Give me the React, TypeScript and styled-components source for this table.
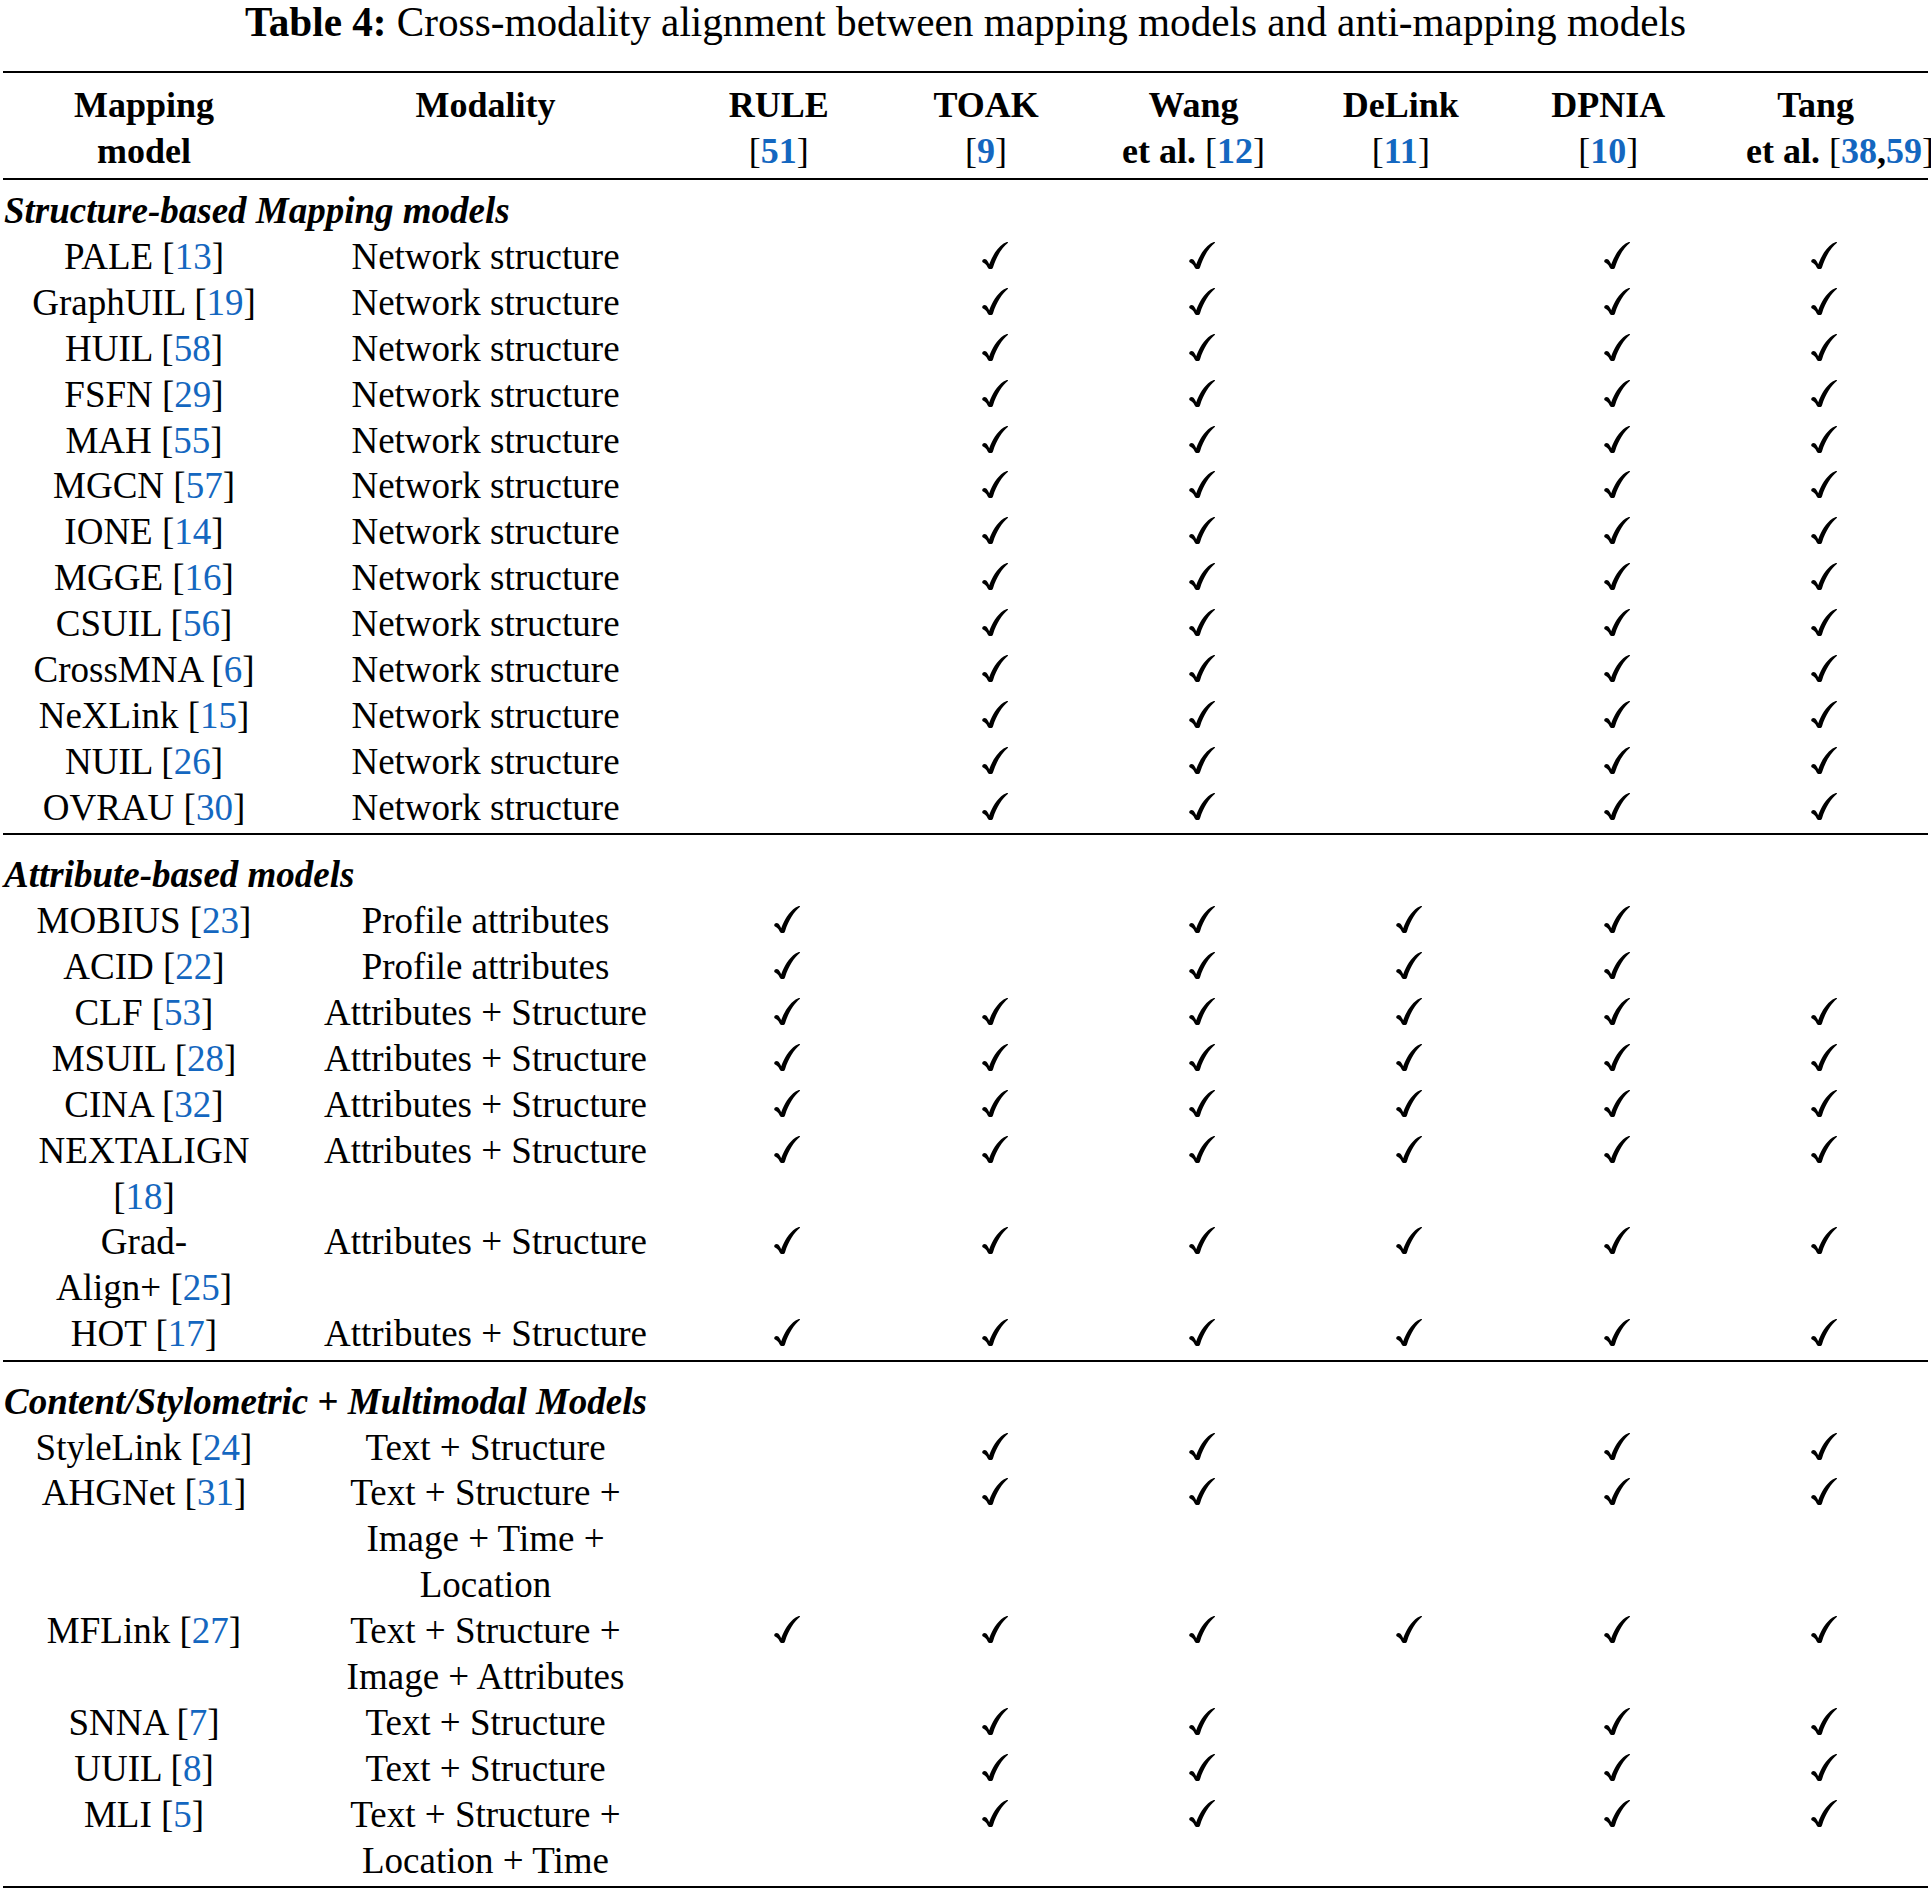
import React from "react";
import styled, { createGlobalStyle } from "styled-components";

const GlobalStyle = createGlobalStyle`
  html, body { margin: 0; padding: 0; background: #ffffff; }
  body {
    font-family: "Liberation Serif", "Times New Roman", serif;
    color: #000000;
  }
`;

const COLS = "282px 390px repeat(6, 207.4px) 1fr";
const BLUE = "#1467c0";

const Page = styled.div`
  width: 1931px;
  box-sizing: border-box;
  padding: 0 3px;
`;

const Caption = styled.div`
  font-size: 41.2px;
  line-height: 45.8px;
  text-align: center;
  white-space: nowrap;
  strong { font-weight: 700; }
`;

const Table = styled.div`
  margin-top: 24.9px;
`;

const HeaderRow = styled.div`
  display: grid;
  grid-template-columns: ${COLS};
  border-top: 2px solid #000;
  border-bottom: 2px solid #000;
  padding: 9px 0 4.8px;
  font-weight: 700;
  font-size: 36px;
  line-height: 46px;
  text-align: center;
`;

const HeadCell = styled.div<{ $pad?: number }>`
  padding-left: ${(p) => p.$pad ?? 0}px;
  white-space: nowrap;
`;

const HeadLine = styled.div<{ $shift?: number }>`
  white-space: nowrap;
  text-align: ${(p) => (p.$shift ? "left" : "center")};
  padding-left: ${(p) => p.$shift ?? 0}px;
`;

const Group = styled.section<{ $gap: number }>`
  margin-top: ${(p) => p.$gap}px;
  padding-bottom: 2.5px;
  border-bottom: 2px solid #000;
`;

const SectionTitle = styled.div`
  font-weight: 700;
  font-style: italic;
  font-size: 37px;
  line-height: 45.9px;
  padding-left: 1px;
  white-space: nowrap;
`;

const Upright = styled.span`
  font-style: normal;
`;

const Row = styled.div`
  display: grid;
  grid-template-columns: ${COLS};
  font-size: 37px;
  line-height: 45.9px;
  text-align: center;
`;

const ModelCell = styled.div`
  white-space: nowrap;
`;

const ModalityCell = styled.div`
  padding-left: 11px;
  white-space: nowrap;
`;

const CheckCell = styled.div`
  padding-left: 17px;
`;

const Bracket = styled.span`
  font-weight: 400;
`;

const Num = styled.span`
  color: ${BLUE};
`;

const CheckSvg = styled.svg`
  width: 26px;
  height: 27px;
  vertical-align: baseline;
`;

const Ref: React.FC<{ n: string }> = ({ n }) => {
  const parts = n.split(",");
  return (
    <>
      <Bracket>[</Bracket>
      {parts.map((p, i) => (
        <React.Fragment key={p}>
          {i > 0 && ","}
          <Num>{p}</Num>
        </React.Fragment>
      ))}
      <Bracket>]</Bracket>
    </>
  );
};

const Check: React.FC = () => (
  <CheckSvg viewBox="0 0 26 27" aria-label="check">
    <path
      d="M0.2 19.2 C0.4 17.4 2.6 16.4 4.2 17.6 C5.2 18.4 6 20 7.2 22.2 C10.4 13.6 15 6.2 21.6 1.6 C23 0.6 24.6 0 25.8 0 L26 0.8 C20.2 5.6 14.8 13.6 11 25.4 C10.6 26.6 9.8 27 8.8 27 L7.4 27 C6.6 27 6.1 26.5 5.7 25.6 C4.4 22.8 2.8 21.2 1 20.6 C0.5 20.3 0.2 19.8 0.2 19.2 Z"
      fill="#000"
    />
  </CheckSvg>
);

type RowData = {
  model: React.ReactNode;
  modality: React.ReactNode;
  checks: number[];
};

const NET = "Network structure";
const STRUCT = [0, 1, 1, 0, 1, 1];
const ALL = [1, 1, 1, 1, 1, 1];
const PROFILE = [1, 0, 1, 1, 1, 0];

const m = (name: string, n: string) => (
  <>
    {name} <Ref n={n} />
  </>
);

const section1: RowData[] = [
  ["PALE", "13"],
  ["GraphUIL", "19"],
  ["HUIL", "58"],
  ["FSFN", "29"],
  ["MAH", "55"],
  ["MGCN", "57"],
  ["IONE", "14"],
  ["MGGE", "16"],
  ["CSUIL", "56"],
  ["CrossMNA", "6"],
  ["NeXLink", "15"],
  ["NUIL", "26"],
  ["OVRAU", "30"],
].map(([name, n]) => ({ model: m(name, n), modality: NET, checks: STRUCT }));

const AS = "Attributes + Structure";
const section2: RowData[] = [
  { model: m("MOBIUS", "23"), modality: "Profile attributes", checks: PROFILE },
  { model: m("ACID", "22"), modality: "Profile attributes", checks: PROFILE },
  { model: m("CLF", "53"), modality: AS, checks: ALL },
  { model: m("MSUIL", "28"), modality: AS, checks: ALL },
  { model: m("CINA", "32"), modality: AS, checks: ALL },
  {
    model: (
      <>
        NEXTALIGN
        <br />
        <Ref n="18" />
      </>
    ),
    modality: AS,
    checks: ALL,
  },
  {
    model: (
      <>
        Grad-
        <br />
        Align+ <Ref n="25" />
      </>
    ),
    modality: AS,
    checks: ALL,
  },
  { model: m("HOT", "17"), modality: AS, checks: ALL },
];

const TS = "Text + Structure";
const section3: RowData[] = [
  { model: m("StyleLink", "24"), modality: TS, checks: STRUCT },
  {
    model: m("AHGNet", "31"),
    modality: (
      <>
        Text + Structure +
        <br />
        Image + Time +
        <br />
        Location
      </>
    ),
    checks: STRUCT,
  },
  {
    model: m("MFLink", "27"),
    modality: (
      <>
        Text + Structure +
        <br />
        Image + Attributes
      </>
    ),
    checks: ALL,
  },
  { model: m("SNNA", "7"), modality: TS, checks: STRUCT },
  { model: m("UUIL", "8"), modality: TS, checks: STRUCT },
  {
    model: m("MLI", "5"),
    modality: (
      <>
        Text + Structure +
        <br />
        Location + Time
      </>
    ),
    checks: STRUCT,
  },
];

const headers: { top: string; cite: React.ReactNode; shift?: number }[] = [
  { top: "RULE", cite: <Ref n="51" /> },
  { top: "TOAK", cite: <Ref n="9" /> },
  { top: "Wang", cite: <>et al. <Ref n="12" /></> },
  { top: "DeLink", cite: <Ref n="11" /> },
  { top: "DPNIA", cite: <Ref n="10" /> },
  { top: "Tang", cite: <>et al. <Ref n="38,59" /></>, shift: 34 },
];

const Body: React.FC<{ rows: RowData[] }> = ({ rows }) => (
  <>
    {rows.map((r, i) => (
      <Row key={i}>
        <ModelCell>{r.model}</ModelCell>
        <ModalityCell>{r.modality}</ModalityCell>
        {r.checks.map((c, j) => (
          <CheckCell key={j}>{c ? <Check /> : null}</CheckCell>
        ))}
      </Row>
    ))}
  </>
);

export default function App() {
  return (
    <>
      <GlobalStyle />
      <Page>
        <Caption>
          <strong>Table 4:</strong> Cross-modality alignment between mapping
          models and anti-mapping models
        </Caption>
        <Table>
          <HeaderRow>
            <HeadCell>
              <HeadLine>Mapping</HeadLine>
              <HeadLine>model</HeadLine>
            </HeadCell>
            <HeadCell $pad={11}>
              <HeadLine>Modality</HeadLine>
            </HeadCell>
            {headers.map((h) => (
              <HeadCell key={h.top}>
                <HeadLine>{h.top}</HeadLine>
                <HeadLine $shift={h.shift}>{h.cite}</HeadLine>
              </HeadCell>
            ))}
          </HeaderRow>

          <Group $gap={7.5}>
            <SectionTitle>Structure-based Mapping models</SectionTitle>
            <Body rows={section1} />
          </Group>

          <Group $gap={17}>
            <SectionTitle>Attribute-based models</SectionTitle>
            <Body rows={section2} />
          </Group>

          <Group $gap={17}>
            <SectionTitle>
              Content/Stylometric <Upright>+</Upright> Multimodal Models
            </SectionTitle>
            <Body rows={section3} />
          </Group>
        </Table>
      </Page>
    </>
  );
}
